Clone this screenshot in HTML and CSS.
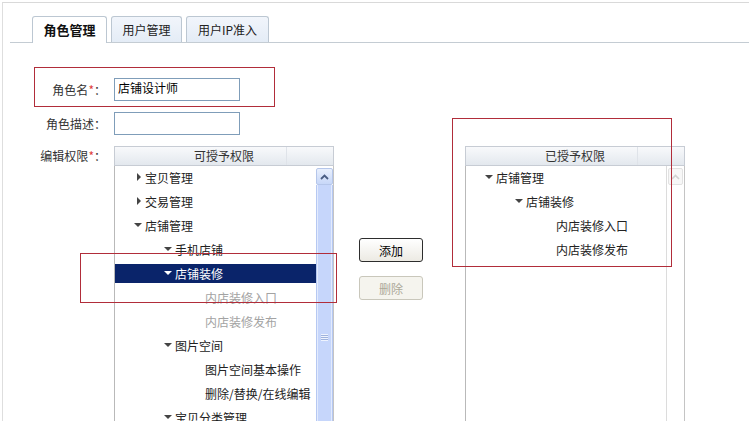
FILE: index.html
```html
<!DOCTYPE html>
<html lang="zh-CN">
<head>
<meta charset="utf-8">
<title>角色管理</title>
<link rel="stylesheet" href="styles.css">
</head>
<body>
<div class="frame">
  <div class="tabs">
    <div class="tab active">角色管理</div>
    <div class="tab t2">用户管理</div>
    <div class="tab t3">用户IP准入</div>
  </div>
  <div class="form">
    <div class="row">
      <label class="lbl">角色名<em>*</em>：</label>
      <input class="txt" type="text" value="店铺设计师">
    </div>
    <div class="row">
      <label class="lbl">角色描述：</label>
      <input class="txt" type="text" value="">
    </div>
    <div class="row perm">
      <label class="lbl">编辑权限<em>*</em>：</label>
      <div class="list">
        <div class="head">可授予权限</div>
        <div class="lbody">
          <div class="tree">
            <div class="node l0"><span class="tw"><i class="tri r"></i></span><span>宝贝管理</span></div>
            <div class="node l0"><span class="tw"><i class="tri r"></i></span><span>交易管理</span></div>
            <div class="node l0"><span class="tw"><i class="tri d"></i></span><span>店铺管理</span></div>
            <div class="node l1"><span class="tw"><i class="tri d"></i></span><span>手机店铺</span></div>
            <div class="node l1 sel"><span class="tw"><i class="tri d"></i></span><span>店铺装修</span></div>
            <div class="node l2 off"><span class="tw"></span><span>内店装修入口</span></div>
            <div class="node l2 off"><span class="tw"></span><span>内店装修发布</span></div>
            <div class="node l1"><span class="tw"><i class="tri d"></i></span><span>图片空间</span></div>
            <div class="node l2"><span class="tw"></span><span>图片空间基本操作</span></div>
            <div class="node l2"><span class="tw"></span><span>删除/替换/在线编辑</span></div>
            <div class="node l1"><span class="tw"><i class="tri d"></i></span><span>宝贝分类管理</span></div>
          </div>
          <div class="sb">
            <div class="sbtn">
              <svg width="9" height="6" viewBox="0 0 9 6"><polyline points="1,5 4.5,1.5 8,5" fill="none" stroke="#4a5d84" stroke-width="1.8"/></svg>
            </div>
            <div class="thumb"><span class="grip"></span></div>
          </div>
        </div>
      </div>
      <div class="ops">
        <button class="btn" type="button">添加</button>
        <button class="btn" type="button" disabled>删除</button>
      </div>
      <div class="list right">
        <div class="head">已授予权限</div>
        <div class="lbody">
          <div class="tree">
            <div class="node l0"><span class="tw"><i class="tri d"></i></span><span>店铺管理</span></div>
            <div class="node l1"><span class="tw"><i class="tri d"></i></span><span>店铺装修</span></div>
            <div class="node l2"><span class="tw"></span><span>内店装修入口</span></div>
            <div class="node l2"><span class="tw"></span><span>内店装修发布</span></div>
          </div>
          <div class="sb dis">
            <div class="sbtn">
              <svg width="9" height="6" viewBox="0 0 9 6"><polyline points="1,5 4.5,1.5 8,5" fill="none" stroke="#d2d2d2" stroke-width="1.6"/></svg>
            </div>
          </div>
        </div>
      </div>
    </div>
  </div>
</div>
<div class="mark m1"></div>
<div class="mark m2"></div>
<div class="mark m3"></div>
</body>
</html>
```

FILE: styles.css
```css
html, body {
  margin: 0;
  padding: 0;
  background: #fff;
}
body {
  position: relative;
  width: 749px;
  height: 421px;
  overflow: hidden;
  font-family: "Noto Sans CJK SC", "Liberation Sans", sans-serif;
  font-size: 12px;
  color: #333;
}
.frame {
  margin: 2px 0 0 2px;
  height: 419px;
  border-top: 1px solid #d9d9d9;
  border-left: 1px solid #dedede;
  box-sizing: border-box;
  overflow: hidden;
}

/* tabs */
.tabs {
  display: flex;
  align-items: flex-end;
  margin: 13px 0 0 7px;
  padding-left: 22px;
  height: 26px;
  border-bottom: 1px solid #c4ccd3;
}
.tab {
  box-sizing: border-box;
  height: 26px;
  border: 1px solid #bcc7d2;
  border-bottom: none;
  border-radius: 3px 3px 0 0;
  display: flex;
  align-items: center;
  justify-content: center;
  background: linear-gradient(#f1f5fb, #e4ecf6);
  color: #222;
  margin-right: 4px;
}
.tab.active {
  width: 75px;
  height: 27px;
  margin-bottom: -1px;
  background: #fff;
  font-weight: bold;
  font-size: 13px;
  color: #111;
  padding-bottom: 1px;
}
.tab.t2 { width: 71px; }
.tab.t3 { width: 83px; }

/* form */
.form {
  margin-top: 35px;
}
.row {
  display: flex;
  align-items: center;
  margin-bottom: 11px;
}
.lbl {
  width: 103px;
  margin-right: 8px;
  text-align: right;
  color: #333;
  white-space: nowrap;
}
.lbl em {
  font-style: normal;
  color: #e03c3c;
}
.txt {
  box-sizing: border-box;
  width: 126px;
  height: 23px;
  border: 1px solid #7f9db9;
  padding: 0 3px 4px;
  margin: 0;
  font-family: inherit;
  font-size: 12px;
  color: #000;
  outline: none;
}
.row.perm {
  align-items: flex-start;
}
.row.perm .lbl {
  line-height: 18px;
  padding-top: 1px;
}

/* lists */
.list {
  width: 220px;
  flex: none;
}
.head {
  box-sizing: border-box;
  height: 20px;
  border: 1px solid #c7ccd4;
  line-height: 18px;
  text-align: center;
  color: #333;
  background:
    linear-gradient(to right, transparent 171px, #dfe3e9 171px, #dfe3e9 172px, transparent 172px),
    linear-gradient(#f8f9fb, #e3e8ee);
}
.lbody {
  display: flex;
  height: 262px;
  border-left: 1px solid #b9b9b9;
  border-right: 1px solid #c4c4c4;
}
.tree {
  width: 201px;
  margin-top: -1px;
}
.node {
  height: 24px;
  display: flex;
  align-items: center;
  color: #222;
  white-space: nowrap;
  padding-left: 19px;
}
.node.l1 { padding-left: 49px; }
.node.l2 { padding-left: 79px; }
.node.off { color: #a3a3a3; }
.node.sel {
  background: linear-gradient(transparent 3px, #0a246a 3px, #0a246a 22px, transparent 22px);
  color: #fff;
}
.tw {
  width: 11px;
  flex: none;
  display: flex;
  justify-content: flex-end;
  padding-right: 4px;
  box-sizing: border-box;
}
.tri {
  display: block;
  width: 0;
  height: 0;
}
.tri.r {
  border-left: 4px solid #444;
  border-top: 4px solid transparent;
  border-bottom: 4px solid transparent;
}
.tri.d {
  border-top: 4px solid #444;
  border-left: 4px solid transparent;
  border-right: 4px solid transparent;
  margin-right: -1px;
}
.node.sel .tri.d { border-top-color: #fff; }

/* scrollbar */
.sb {
  width: 17px;
  flex: none;
  display: flex;
  flex-direction: column;
  background: #fff;
}
.sbtn {
  box-sizing: border-box;
  height: 17px;
  margin-top: 2px;
  border: 1px solid #b5c6ea;
  border-radius: 2px;
  background: linear-gradient(#e9f0fd, #c7d7f8);
  display: flex;
  align-items: center;
  justify-content: center;
}
.thumb {
  flex: 1;
  border: 1px solid #b6c8f2;
  border-top: none;
  box-shadow: inset 1px 0 0 #e3ebfd, inset -1px 0 0 #e3ebfd;
  background: #c6d6fb;
  position: relative;
}
.grip {
  position: absolute;
  left: 4px;
  top: 149px;
  width: 7px;
  height: 7px;
  background: repeating-linear-gradient(#eef3fe 0 1px, #9fb3dd 1px 2px);
}
.list.right .tree { width: 200px; }
.sb.dis {
  border-left: 1px solid #dcdcdc;
}
.sb.dis .sbtn {
  border-color: #e2e2e2;
  background: #f7f7f7;
  margin-left: 1px;
  margin-right: 1px;
}

/* buttons */
.ops {
  display: flex;
  flex-direction: column;
  width: 64px;
  margin: 92px 42px 0 25px;
  flex: none;
}
.btn {
  box-sizing: border-box;
  width: 64px;
  height: 24px;
  margin: 0 0 14px;
  padding: 0;
  border: 1px solid #2d2d2d;
  border-radius: 3px;
  background: linear-gradient(#ffffff, #eceae3);
  font-family: inherit;
  font-size: 12px;
  color: #000;
}
.btn:disabled {
  border-color: #c9c7bb;
  background: #f5f4ee;
  color: #aca899;
}

/* annotation boxes */
.mark {
  position: absolute;
  border: 1px solid #b12d3a;
  box-sizing: border-box;
}
.m1 { left: 34px; top: 67px; width: 241px; height: 40px; }
.m2 { left: 80px; top: 253px; width: 257px; height: 50px; }
.m3 { left: 452px; top: 118px; width: 220px; height: 149px; }
```
